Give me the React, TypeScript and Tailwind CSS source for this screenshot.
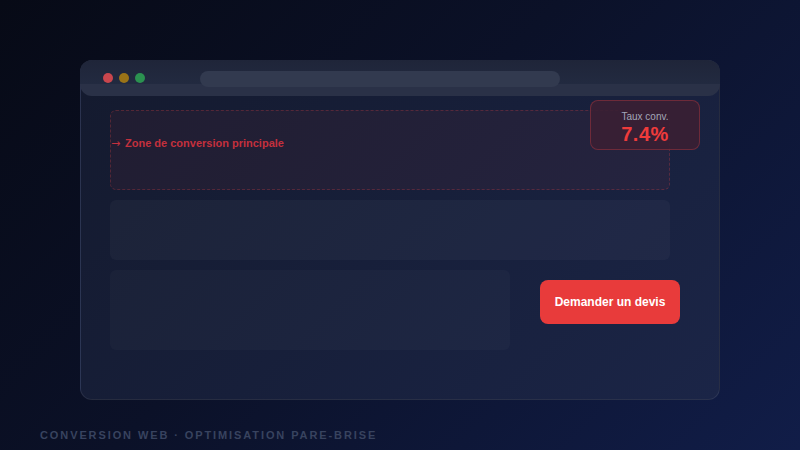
export default function App() {
  return (
    <div
      className="w-[800px] h-[450px] overflow-hidden bg-[linear-gradient(135deg,#070a16_0%,#0b1128_45%,#111d48_100%)] pt-[60px] flex flex-col"
      style={{ fontFamily: '"Liberation Sans", Arial, sans-serif' }}
    >
      {/* Browser mockup */}
      <div className="relative ml-[80px] w-[640px] h-[340px] rounded-[12px] border border-[#ffffff14] bg-[linear-gradient(135deg,#141a2e_0%,#171f3a_50%,#1b2547_100%)]">
        {/* Chrome bar */}
        <div className="h-[36px] -mx-px -mt-px rounded-[12px] bg-[linear-gradient(to_bottom,#1f2539_0px,#222a40_24px,#2a3147_24px,#2a3147_36px)] flex items-center pl-[23px]">
          <div className="flex gap-[6px]">
            <span className="w-[10px] h-[10px] rounded-full bg-[#c9464d]" />
            <span className="w-[10px] h-[10px] rounded-full bg-[#9a7317]" />
            <span className="w-[10px] h-[10px] rounded-full bg-[#2b9150]" />
          </div>
          <div className="ml-[55px] w-[360px] h-[16px] mt-[2px] rounded-full bg-[#323a4f]" />
        </div>

        {/* Page content */}
        <div className="pl-[29px] pt-[14px] flex flex-col gap-[10px]">
          <div className="w-[560px] h-[80px] rounded-[6px] border-[1.5px] border-dashed border-[#ef444440] bg-[#ef44440f] pt-[26px]">
            <div className="flex items-center text-[11px] leading-[13px] font-bold text-[#c3303d]">
              <span className="w-[14px] font-normal" style={{ fontFamily: '"DejaVu Sans", sans-serif' }}>→</span>
              <span>Zone de conversion principale</span>
            </div>
          </div>
          <div className="w-[560px] h-[60px] rounded-[6px] bg-[#ffffff08]" />
          <div className="flex items-start gap-[30px]">
            <div className="w-[400px] h-[80px] rounded-[6px] bg-[#ffffff06]" />
            <button className="mt-[10px] w-[140px] h-[44px] rounded-[8px] bg-[#e83b3b] text-white text-[12px] font-bold">
              Demander un devis
            </button>
          </div>
        </div>

        {/* Conversion rate badge */}
        <div className="absolute top-[39px] right-[19px] w-[110px] h-[50px] rounded-[8px] border border-[#ef44444d] bg-[#3a1f33e6] flex flex-col items-center pt-[10px]">
          <span className="text-[10px] leading-[12px] text-[#a3a6b8]">Taux conv.</span>
          <span className="text-[20px] leading-[22px] font-bold text-[#ef3b3b] tracking-[0.5px]">7.4%</span>
        </div>
      </div>

      <div className="ml-[40px] mt-[29px] text-[11px] leading-[13px] font-bold tracking-[1.9px] text-[#38435f]">
        CONVERSION WEB · OPTIMISATION PARE-BRISE
      </div>
    </div>
  );
}
